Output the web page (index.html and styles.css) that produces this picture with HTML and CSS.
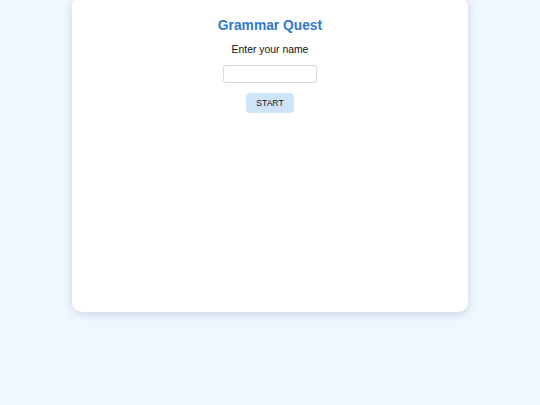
FILE: index.html
```html
<!DOCTYPE html>
<html>
<head>
<meta charset="utf-8">
<link rel="stylesheet" href="styles.css">
</head>
<body>
<div class="card">
  <h1 class="title">Grammar Quest</h1>
  <p class="prompt">Enter your name</p>
  <input class="name-input" type="text">
  <button class="start-btn">START</button>
</div>
</body>
</html>
```
FILE: styles.css
```css
html, body {
  margin: 0;
  padding: 0;
}
body {
  background: #eff7ff;
  font-family: "Liberation Sans", Arial, sans-serif;
  height: 405px;
  overflow: hidden;
}
.card {
  box-sizing: border-box;
  width: 396px;
  height: 316px;
  margin: -4px auto 0;
  background: #ffffff;
  border-radius: 10px;
  box-shadow: 0 2px 8px rgba(60, 90, 130, 0.22);
  display: flex;
  flex-direction: column;
  align-items: center;
  padding-top: 21px;
}
.title {
  margin: 0;
  font-size: 13.8px;
  line-height: 18px;
  font-weight: bold;
  color: #2f78cc;
}
.prompt {
  margin: 8px 0 0;
  font-size: 10.4px;
  line-height: 14px;
  color: #111;
}
.name-input {
  box-sizing: border-box;
  margin-top: 8px;
  width: 94px;
  height: 18px;
  border: 1px solid #d8d8d8;
  border-radius: 3px;
  background: #fff;
  padding: 0 4px;
  outline: none;
}
.start-btn {
  box-sizing: border-box;
  margin-top: 10px;
  width: 48px;
  height: 20px;
  border: none;
  border-radius: 4px;
  background: #cfe4fb;
  color: #111;
  font-family: "Liberation Sans", Arial, sans-serif;
  font-size: 8.6px;
  padding: 0;
}
```
